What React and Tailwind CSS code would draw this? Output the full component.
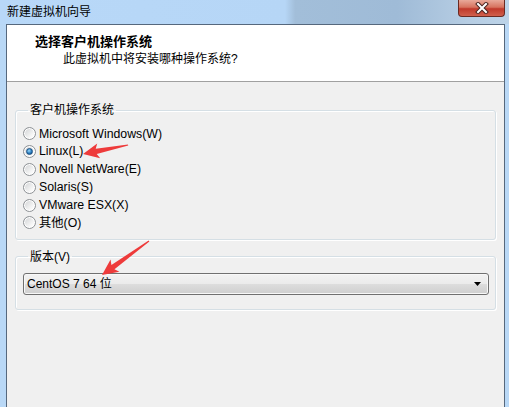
import { useState } from "react";

const FONT = "font-['Liberation_Sans','Noto_Sans_CJK_SC',sans-serif]";

const systems = [
  { id: "win", label: "Microsoft Windows(W)" },
  { id: "linux", label: "Linux(L)" },
  { id: "netware", label: "Novell NetWare(E)" },
  { id: "solaris", label: "Solaris(S)" },
  { id: "esx", label: "VMware ESX(X)" },
  { id: "other", label: "其他(O)" },
];

const Radio = ({ checked }) => (
  <span className="flex items-center justify-center w-[13px] h-[13px] rounded-full border border-[#8e9296] bg-[linear-gradient(135deg,#cfd1d3,#f7f7f7_70%,#ffffff)] shadow-[inset_0_0_0_1px_#ffffff]">
    {checked && (
      <span className="w-[7px] h-[7px] rounded-full bg-[radial-gradient(circle_at_40%_35%,#9ad8fb,#2a7ec0_55%,#0e3f70)] border border-[#1b4f82]" />
    )}
  </span>
);

const Arrow = ({ x, y, angle, length }) => (
  <g transform={`translate(${x} ${y}) rotate(${angle})`}>
    <polygon
      points={`0,0 16,-7.5 13.5,-2.6 ${length},-0.6 ${length},0.6 13.5,2.6 16,7.5`}
      fill="#ee3b3b"
    />
  </g>
);

const App = () => {
  const [os, setOs] = useState("linux");

  return (
    <div className={`relative w-[509px] h-[407px] overflow-hidden flex flex-col bg-[#b9d8f6] ${FONT}`}>
      {/* title bar */}
      <div className="h-[24px] flex items-center justify-between bg-[linear-gradient(to_right,#b8d8f8_0%,#b6d6f6_56%,#a2bed9_58%,#9fbbd7_78%,#b6cde3_92%,#bcd3e8_100%)]">
        <span className="pl-[7px] text-[12px] leading-[24px] text-black">新建虚拟机向导</span>
        <div className="self-start mr-[4px] w-[47px] h-[17px] rounded-b-[4px] border border-t-0 border-[#6a2a22] bg-[linear-gradient(#e9a99a,#d7735f_45%,#c0392b_55%,#d0604c)] flex items-center justify-center">
          <svg width="14" height="12" viewBox="0 0 14 12">
            <path d="M3 2 L11 10 M11 2 L3 10" stroke="#4a2420" strokeWidth="4" strokeLinecap="square" />
            <path d="M3 2 L11 10 M11 2 L3 10" stroke="#ffffff" strokeWidth="2" strokeLinecap="square" />
          </svg>
        </div>
      </div>

      {/* client area */}
      <div className="flex-1 flex flex-col ml-[6px] mr-[4px] border-x border-t border-[#56687d] bg-[#f0f0f0]">
        <div className="h-[57px] bg-white border-b border-[#a0a0a0] pt-[9px]">
          <div className="pl-[28px] text-[13px] leading-[16px] font-bold text-black">选择客户机操作系统</div>
          <div className="pl-[56px] mt-[1px] text-[12px] leading-[16px] text-black">此虚拟机中将安装哪种操作系统?</div>
        </div>

        <div className="px-[8px]">
          <fieldset className="mt-[20px] border border-[#d5dfe5] rounded-[3px] pl-[7px] pr-[6px] pt-[7px] pb-[7px] shadow-[inset_1px_1px_0_#ffffff,1px_1px_0_#ffffff]">
            <legend className="ml-[5px] px-[2px] text-[12px] leading-[16px] text-black">客户机操作系统</legend>
            {systems.map((s) => (
              <label
                key={s.id}
                className="h-[17.8px] flex items-center gap-[3px] text-[12.3px] text-black cursor-default"
                onClick={() => setOs(s.id)}
              >
                <Radio checked={os === s.id} />
                <span>{s.label}</span>
              </label>
            ))}
          </fieldset>

          <fieldset className="mt-[9px] border border-[#d5dfe5] rounded-[3px] pl-[7px] pr-[6px] pt-[8px] pb-[14px] shadow-[inset_1px_1px_0_#ffffff,1px_1px_0_#ffffff]">
            <legend className="ml-[5px] px-[2px] text-[12px] leading-[16px] text-black">版本(V)</legend>
            <div className="h-[22px] flex items-center justify-between pl-[3px] pr-[7px] rounded-[3px] border border-[#707070] bg-[linear-gradient(#f2f2f2,#ebebeb_50%,#dddddd_50%,#cfcfcf)] text-[12px] text-black shadow-[inset_0_0_0_1px_#f8f8f8]">
              <span>CentOS 7 64 位</span>
              <svg width="7" height="4" viewBox="0 0 7 4">
                <polygon points="0,0 7,0 3.5,4" fill="#000000" />
              </svg>
            </div>
          </fieldset>
        </div>
      </div>

      {/* annotation arrows drawn over the screenshot */}
      <svg className="absolute left-0 top-0 pointer-events-none" width="509" height="407">
        <Arrow x={83} y={154} angle={-11.3} length={46} />
        <Arrow x={102} y={275} angle={-35.9} length={58} />
      </svg>
    </div>
  );
};

export default App;
